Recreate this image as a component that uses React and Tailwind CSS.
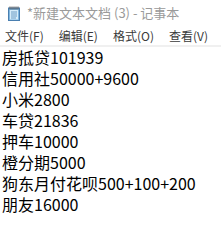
import React from 'react';

const lines = [
  '房抵贷101939',
  '信用社50000+9600',
  '小米2800',
  '车贷21836',
  '押车10000',
  '橙分期5000',
  '狗东月付花呗500+100+200',
  '朋友16000',
];

const menus = ['文件(F)', '编辑(E)', '格式(O)', '查看(V)'];

const NotepadIcon = () => (
  <svg width="14" height="15" viewBox="0 0 14 15">
    <rect x="1.5" y="2" width="11" height="12.5" fill="#7fb6e0" stroke="#4a7fb0" />
    <rect x="3" y="4" width="8" height="9.5" fill="#d6ecfa" />
    <line x1="4" y1="6" x2="10" y2="6" stroke="#6d9cc4" />
    <line x1="4" y1="8" x2="10" y2="8" stroke="#6d9cc4" />
    <line x1="4" y1="10" x2="10" y2="10" stroke="#6d9cc4" />
    <line x1="4" y1="12" x2="9" y2="12" stroke="#6d9cc4" />
    <path d="M3 0.5v3M5 0.5v3M7 0.5v3M9 0.5v3M11 0.5v3" stroke="#555" />
  </svg>
);

export default function App() {
  return (
    <div
      className="w-[221px] h-[230px] bg-white overflow-hidden"
      style={{ fontFamily: '"Noto Sans CJK SC", "Noto Sans", sans-serif' }}
    >
      {/* Title bar */}
      <div className="flex items-center h-[26px] pl-[7px] gap-[6px]">
        <NotepadIcon />
        <span className="text-[13px] text-[#9a9a9a] whitespace-nowrap">*新建文本文档 (3) - 记事本</span>
      </div>

      {/* Menu */}
      <div className="flex items-center h-[19px] pl-[5px] gap-[15px] text-[12px] text-[#3a3a3a] whitespace-nowrap">
        {menus.map((m) => (
          <span key={m}>{m}</span>
        ))}
        <span className="text-[#e8a060]">帮</span>
      </div>
      <div className="h-[2px] bg-[#f0f0f0]" />

      {/* Content */}
      <div className="pl-[2px] text-[16px] leading-[21px] text-black whitespace-nowrap">
        {lines.map((l) => (
          <div key={l}>{l}</div>
        ))}
      </div>
    </div>
  );
}
